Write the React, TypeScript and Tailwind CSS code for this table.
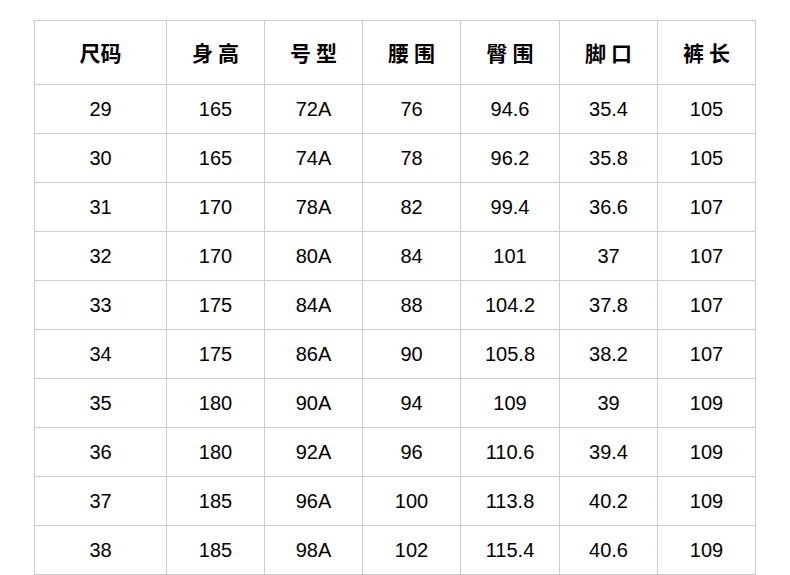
import React from "react";

const headers = ["尺码", "身 高", "号 型", "腰 围", "臀 围", "脚 口", "裤 长"];

const rows = [
  ["29", "165", "72A", "76", "94.6", "35.4", "105"],
  ["30", "165", "74A", "78", "96.2", "35.8", "105"],
  ["31", "170", "78A", "82", "99.4", "36.6", "107"],
  ["32", "170", "80A", "84", "101", "37", "107"],
  ["33", "175", "84A", "88", "104.2", "37.8", "107"],
  ["34", "175", "86A", "90", "105.8", "38.2", "107"],
  ["35", "180", "90A", "94", "109", "39", "109"],
  ["36", "180", "92A", "96", "110.6", "39.4", "109"],
  ["37", "185", "96A", "100", "113.8", "40.2", "109"],
  ["38", "185", "98A", "102", "115.4", "40.6", "109"],
];

export default function App() {
  return (
    <div className="w-[790px] h-[575px] bg-white overflow-hidden pt-[20px] pl-[34px]">
      <div
        className="grid w-fit grid-cols-[132px_98px_98px_98px_99px_98px_98px] border-l border-t border-[#cccccc] text-black"
        style={{ fontFamily: '"Liberation Sans", "Noto Sans CJK SC", sans-serif' }}
      >
        {headers.map((h) => (
          <div
            key={h}
            className="h-[64px] flex items-center justify-center border-r border-b border-[#cccccc] text-[21px] font-bold whitespace-pre"
            style={{ fontFamily: '"Noto Sans CJK SC", sans-serif' }}
          >
            {h}
          </div>
        ))}
        {rows.map((r, i) =>
          r.map((c, j) => (
            <div
              key={`${i}-${j}`}
              className="h-[49px] flex items-center justify-center border-r border-b border-[#cccccc] text-[20px]"
            >
              {c}
            </div>
          ))
        )}
      </div>
    </div>
  );
}
